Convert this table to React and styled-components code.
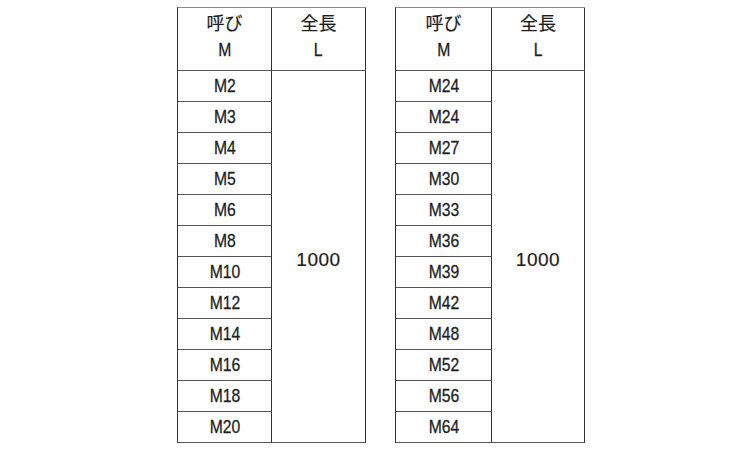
import React from "react";
import styled, { createGlobalStyle } from "styled-components";

const Global = createGlobalStyle`
  html, body { margin: 0; padding: 0; background: #fff; }
  body { font-family: "Liberation Sans", Arial, sans-serif; color: #1e1e1e; }
`;

const Page = styled.div`
  width: 750px;
  height: 450px;
  box-sizing: border-box;
  padding: 7px 0 0 177px;
  display: flex;
  gap: 29px;
  align-items: flex-start;
`;

const Table = styled.div`
  display: grid;
  grid-template-columns: ${(p) => p.$cols};
  grid-template-rows: 63px repeat(12, 31px);
  border-top: 1px solid #8a8a8a;
  border-left: 1px solid #333;
`;

const Cell = styled.div`
  box-sizing: border-box;
  border-right: 1px solid #333;
  border-bottom: 1px solid #555;
  display: flex;
  align-items: center;
  justify-content: center;
`;

const HeadCell = styled(Cell)`
  flex-direction: column;
  padding-bottom: 6px;
`;

const HeadLine = styled.div`
  height: 28px;
  display: flex;
  align-items: center;
  justify-content: center;
`;

const Jp = styled.span`
  font-family: "Noto Sans CJK JP", "Liberation Sans", sans-serif;
  font-size: 18px;
  line-height: 1;
  -webkit-text-stroke: 0.2px #1e1e1e;
`;

const Label = styled.span`
  display: inline-block;
  font-size: 18.5px;
  line-height: 1;
  transform: scaleX(0.85);
  -webkit-text-stroke: 0.3px #1e1e1e;
`;

const LengthCell = styled(Cell)`
  grid-column: 2;
  grid-row: 2 / span 12;
  padding-top: 5px;
`;

const Length = styled.span`
  font-size: 19px;
  line-height: 1;
  letter-spacing: 0.5px;
  -webkit-text-stroke: 0.2px #1e1e1e;
`;

const SizeTable = ({ sizes, cols }) => (
  <Table $cols={cols}>
    <HeadCell>
      <HeadLine><Jp>呼び</Jp></HeadLine>
      <HeadLine><Label>M</Label></HeadLine>
    </HeadCell>
    <HeadCell>
      <HeadLine><Jp>全長</Jp></HeadLine>
      <HeadLine><Label>L</Label></HeadLine>
    </HeadCell>
    {sizes.map((s, i) => (
      <Cell key={i} style={{ gridColumn: 1, gridRow: i + 2 }}>
        <Label>{s}</Label>
      </Cell>
    ))}
    <LengthCell>
      <Length>1000</Length>
    </LengthCell>
  </Table>
);

const left = ["M2", "M3", "M4", "M5", "M6", "M8", "M10", "M12", "M14", "M16", "M18", "M20"];
const right = ["M24", "M24", "M27", "M30", "M33", "M36", "M39", "M42", "M48", "M52", "M56", "M64"];

export default function App() {
  return (
    <>
      <Global />
      <Page>
        <SizeTable sizes={left} cols="94px 94px" />
        <SizeTable sizes={right} cols="96px 93px" />
      </Page>
    </>
  );
}
